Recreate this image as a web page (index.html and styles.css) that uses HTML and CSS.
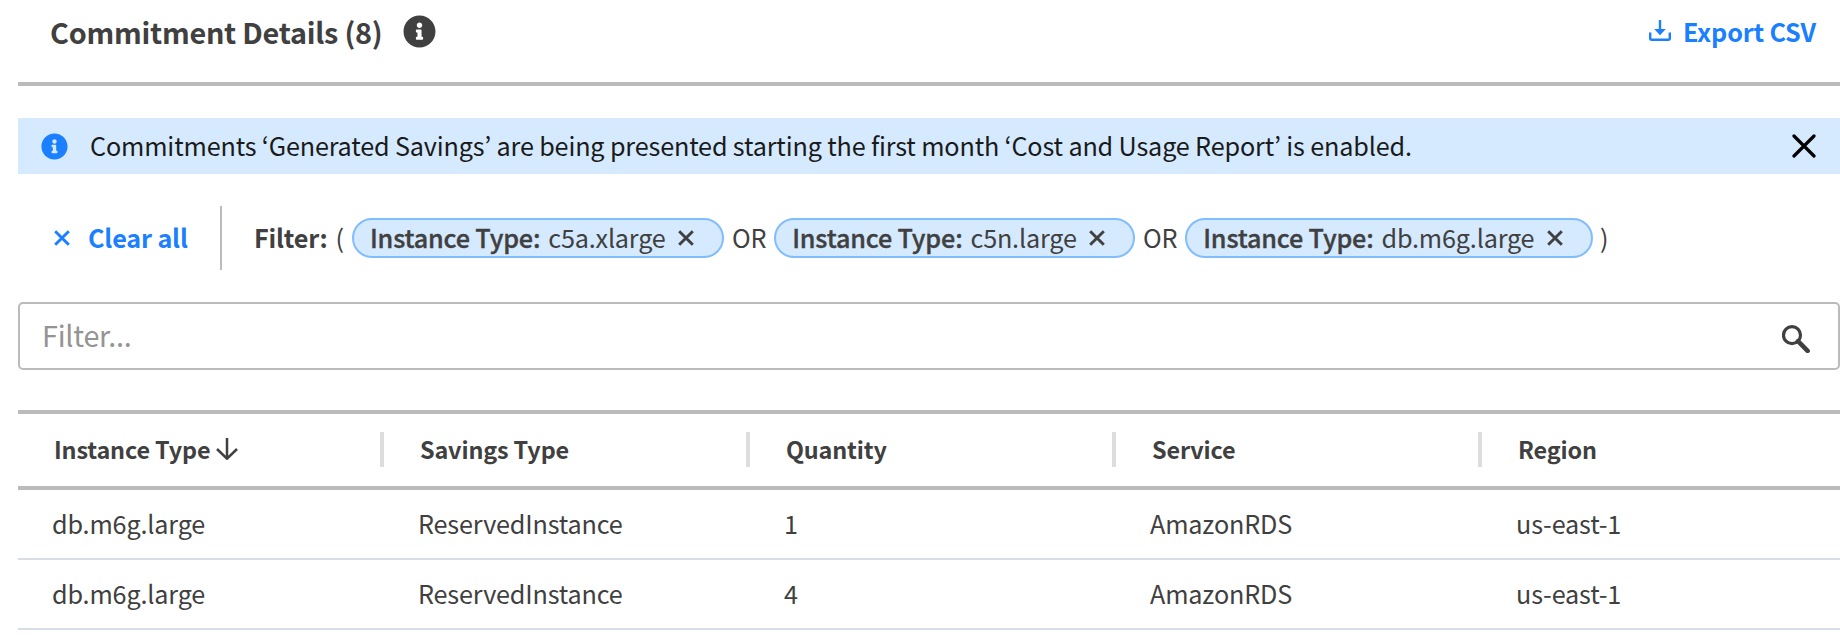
FILE: index.html
```html
<!DOCTYPE html>
<html lang="en">
<head>
<meta charset="utf-8">
<title>Commitment Details</title>
<link rel="stylesheet" href="styles.css">
</head>
<body>
<svg class="defs" aria-hidden="true">
  <symbol id="info" viewBox="0 0 512 512"><path d="M256 8C119 8 8 119 8 256s111 248 248 248 248-111 248-248S393 8 256 8zm0 110c23 0 42 19 42 42s-19 42-42 42-42-19-42-42 19-42 42-42zm56 254c0 7-5 12-12 12h-88c-7 0-12-5-12-12v-24c0-7 5-12 12-12h12v-64h-12c-7 0-12-5-12-12v-24c0-7 5-12 12-12h64c7 0 12 5 12 12v100h12c7 0 12 5 12 12z" fill="currentColor"/></symbol>
  <symbol id="cross" viewBox="0 0 16 16"><path d="M1.2 1.2 14.8 14.8M14.8 1.2 1.2 14.8" fill="none" stroke="currentColor" stroke-width="2.9"/></symbol>
</svg>
<main class="panel">
  <header class="panel-header">
    <h1 class="title">Commitment Details (8)</h1>
    <svg class="title-info"><use href="#info"/></svg>
    <a class="export">
      <svg class="export-icon" viewBox="0 0 22 22"><path d="M1.2 12.5v5.8q0 1.5 1.5 1.5h16.6q1.5 0 1.5-1.5v-5.8M11 0v10" fill="none" stroke="currentColor" stroke-width="2.4"/><path d="M5.2 9h11.6L11 15.3z" fill="currentColor"/></svg>
      <span class="export-text">Export CSV</span>
    </a>
  </header>
  <div class="banner">
    <svg class="banner-info"><use href="#info"/></svg>
    <p class="banner-text">Commitments ‘Generated Savings’ are being presented starting the first month ‘Cost and Usage Report’ is enabled.</p>
    <svg class="banner-close" viewBox="0 0 24 24"><path d="M2 2 22 22M22 2 2 22" fill="none" stroke="currentColor" stroke-width="3.2" stroke-linecap="round"/></svg>
  </div>
  <div class="filters">
    <a class="clear"><svg class="cross"><use href="#cross"/></svg><span class="clear-text">Clear all</span></a>
    <div class="filter-list">
      <b class="filter-label">Filter:</b>
      <span class="paren">(</span>
      <span class="chip"><b class="chip-key">Instance Type:</b><span class="chip-value">c5a.xlarge</span><svg class="cross"><use href="#cross"/></svg></span>
      <span class="op">OR</span>
      <span class="chip"><b class="chip-key">Instance Type:</b><span class="chip-value">c5n.large</span><svg class="cross"><use href="#cross"/></svg></span>
      <span class="op">OR</span>
      <span class="chip"><b class="chip-key">Instance Type:</b><span class="chip-value">db.m6g.large</span><svg class="cross"><use href="#cross"/></svg></span>
      <span class="paren-end">)</span>
    </div>
  </div>
  <div class="search">
    <span class="placeholder">Filter...</span>
    <svg class="search-icon" viewBox="0 0 28 28"><circle cx="10" cy="10.2" r="8.5" fill="none" stroke="currentColor" stroke-width="3.2"/><path d="M16 16.2 25.6 25.8" stroke="currentColor" stroke-width="4.6" stroke-linecap="round"/></svg>
  </div>
  <div class="table">
    <div class="row head">
      <div class="th">Instance Type<svg class="sort" viewBox="0 0 22 22"><path d="M11 0v20.5M1 11l10 9.7L21 11" fill="none" stroke="currentColor" stroke-width="2.5"/></svg></div>
      <div class="th">Savings Type</div>
      <div class="th">Quantity</div>
      <div class="th">Service</div>
      <div class="th">Region</div>
    </div>
    <div class="row body">
      <div class="td">db.m6g.large</div><div class="td">ReservedInstance</div><div class="td">1</div><div class="td">AmazonRDS</div><div class="td">us-east-1</div>
    </div>
    <div class="row body">
      <div class="td">db.m6g.large</div><div class="td">ReservedInstance</div><div class="td">4</div><div class="td">AmazonRDS</div><div class="td">us-east-1</div>
    </div>
  </div>
</main>
</body>
</html>
```
FILE: styles.css
```css
* { box-sizing: border-box; }
body {
  margin: 0;
  background: #fff;
  color: #404040;
  font: 25.2px/36px "Noto Sans CJK KR", "Noto Sans CJK SC", sans-serif;
  letter-spacing: -0.155px;
  white-space: nowrap;
  overflow: hidden;
}
svg { display: block; flex: none; }
.defs { position: absolute; width: 0; height: 0; }
.panel { padding-left: 18px; }
.panel-header {
  display: flex;
  align-items: flex-start;
  height: 86px;
  border-bottom: 4px solid #bbb;
  padding: 11px 24px 0 32px;
}
.title { margin: 1px 0 0; font-size: 28.8px; line-height: 40px; font-weight: 700; letter-spacing: -0.24px; }
.title-info { width: 33px; height: 33px; margin: 4px 0 0 20.5px; }
.export { display: flex; margin-left: auto; color: #1a80ff; font-weight: 700; }
.export-icon { width: 22px; height: 22px; margin: 9px 12px 0 0; }
.export-text { margin-top: 2px; letter-spacing: -0.18px; }
.banner {
  display: flex;
  align-items: center;
  height: 56px;
  margin-top: 32px;
  padding: 0 24px 0 22.5px;
  background: #d5e9ff;
  color: #1a1a1a;
}
.banner-info { width: 27px; height: 27px; color: #1a80ff; }
.banner-text { margin: 0 auto 2px 22.5px; }
.banner-close { width: 24px; height: 24px; color: #000; }
.filters { display: flex; align-items: center; height: 64px; margin-top: 32px; }
.cross { width: 16px; height: 16px; }
.clear {
  display: flex;
  align-items: center;
  width: 204px;
  height: 64px;
  padding-left: 36px;
  border-right: 2px solid #bbb;
  color: #1a80ff;
  font-weight: 700;
}
.clear-text { margin: 0 0 2px 18px; }
.filter-list { display: flex; align-items: center; margin-left: 32px; }
.filter-label, .paren, .paren-end, .op { margin-bottom: 2px; }
.filter-label { width: 81.5px; }
.paren { width: 16.5px; }
.chip {
  display: flex;
  align-items: center;
  height: 40px;
  padding: 0 28px 0 16px;
  border: 2px solid #80bdff;
  border-radius: 20px;
  background: #d5e9ff;
  letter-spacing: -0.18px;
}
.chip-key { margin: 0 8px 2px 0; font-weight: 500; -webkit-text-stroke: 0.35px currentColor; }
.chip-value { margin: 0 12.6px 2px 0; }
.op { width: 50px; text-align: center; }
.paren-end { margin-left: 7px; }
.search {
  display: flex;
  align-items: center;
  justify-content: space-between;
  height: 68px;
  margin-top: 32px;
  padding: 0 28px 0 22px;
  border: 2px solid #bbb;
  border-radius: 5px;
}
.placeholder { font-size: 28.8px; letter-spacing: -0.25px; color: #949494; margin-bottom: 2px; }
.search-icon { width: 28px; height: 28px; margin-top: 6px; }
.table { margin-top: 40px; }
.row { display: grid; grid-template-columns: repeat(4, 366px) 1fr; align-items: center; }
.head { height: 80px; padding-bottom: 1px; border: solid #bbb; border-width: 4px 0; }
.th {
  display: flex;
  align-items: center;
  height: 35px;
  padding: 0 0 1px 36px;
  font-size: 23.4px;
  font-weight: 700;
}
.th:not(:last-child) { border-right: 4px solid #ddd; }
.sort { width: 22px; height: 22px; margin-left: 6px; }
.body { height: 70px; border-bottom: 2px solid #d8dce6; }
.td { padding: 0 0 2px 34px; }
```
